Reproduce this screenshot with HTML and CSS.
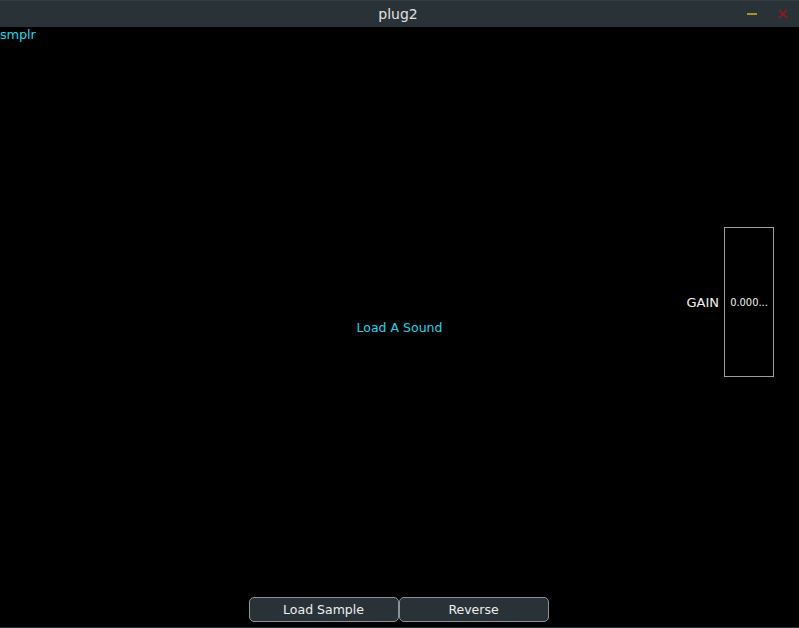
FILE: index.html
```html
<!DOCTYPE html>
<html>
<head>
<meta charset="utf-8">
<link rel="stylesheet" href="styles.css">
</head>
<body>
<div class="window">
  <header class="titlebar">
    <span class="title">plug2</span>
    <div class="controls">
      <span class="min"></span>
      <svg class="close" width="10" height="10" viewBox="0 0 10 10"><path d="M1 1L9 9M9 1L1 9" stroke="#a0141e" stroke-width="1.6"/></svg>
    </div>
  </header>
  <main class="canvas">
    <div class="brand">smplr</div>
    <div class="stage">
      <div class="placeholder">Load A Sound</div>
      <div class="gain">
        <span class="gain-label">GAIN</span>
        <div class="gain-box">0.000...</div>
      </div>
    </div>
    <div class="buttons">
      <button class="btn">Load Sample</button>
      <button class="btn">Reverse</button>
    </div>
  </main>
</div>
</body>
</html>
```
FILE: styles.css
```css
html, body { margin: 0; padding: 0; background: #000; }
body { width: 799px; height: 628px; overflow: hidden; font-family: "DejaVu Sans", sans-serif; }
.window { display: flex; flex-direction: column; height: 628px; }
.titlebar {
  height: 27px; flex: none; background: #283237; border-top: 1px solid #323c41;
  box-sizing: border-box; display: flex; align-items: center; justify-content: center; position: relative;
}
.title { color: #e0e0e0; font-size: 14px; line-height: 1; margin-left: -3px; }
.controls { position: absolute; right: 11px; top: 8px; display: flex; align-items: center; gap: 21px; }
.min { width: 10px; height: 2px; background: #a8902a; display: block; }
.close { display: block; }
.canvas {
  flex: 1; display: flex; flex-direction: column; background: #000; border-bottom: 1px solid #2c3438;
}
.brand { color: #13dcec; font-size: 13px; line-height: 16px; height: 16px; letter-spacing: -0.2px; }
.stage { flex: 1; position: relative; display: flex; align-items: center; justify-content: center; }
.placeholder { color: #19d9eb; font-size: 12.5px; margin-top: 14px; }
.gain { position: absolute; right: 25px; top: 184px; display: flex; align-items: center; gap: 5px; }
.gain-label { color: #f0f0f0; font-size: 13px; }
.gain-box {
  width: 48px; height: 148px; border: 1px solid #9aa0a2; display: flex; align-items: center; justify-content: center;
  color: #f0f0f0; font-family: "DejaVu Sans Condensed", "DejaVu Sans", sans-serif; font-size: 11px; font-stretch: condensed;
}
.buttons { display: flex; justify-content: center; gap: 0; padding-bottom: 5px; padding-right: 2px; }
.btn {
  width: 150px; height: 25px; background: #283237; border: 1px solid #8a9498; border-radius: 5px;
  color: #eef0f0; font-family: "DejaVu Sans", sans-serif; font-size: 12.5px; padding: 0; margin: 0;
}
```
